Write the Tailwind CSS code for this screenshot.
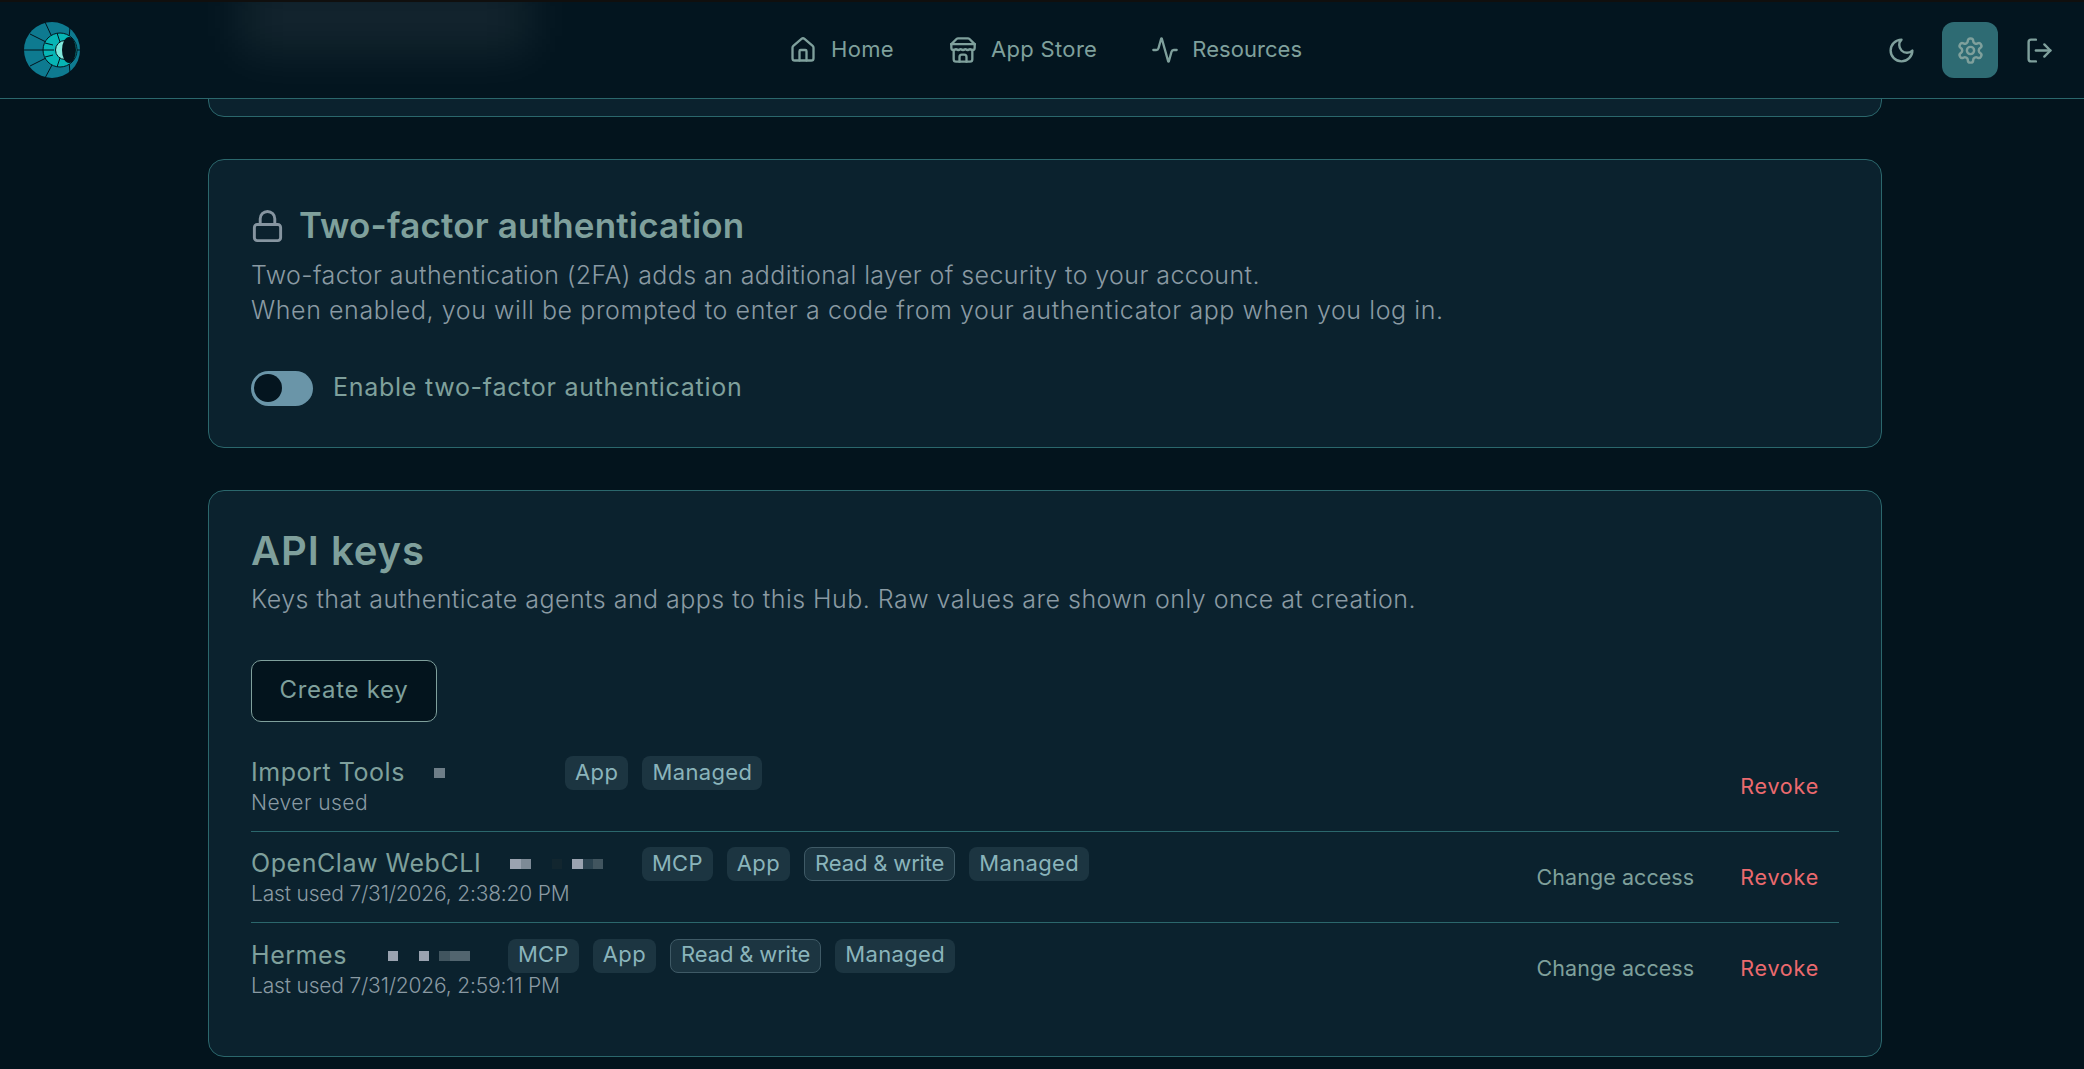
<!DOCTYPE html>
<html lang="en">
<head>
<meta charset="utf-8">
<title>Settings</title>
<script src="https://cdn.jsdelivr.net/npm/@tailwindcss/browser@4"></script>
</head>
<body class="bg-[#03141d] [font-family:Inter,sans-serif] overflow-hidden">
<div class="h-[1069px] overflow-hidden">
  <header class="relative h-[99px] border-t-2 border-t-[#100f0e] border-b border-b-[#2b676c] bg-[#03151f] flex items-center justify-between pl-[24px] pr-[17px] overflow-hidden">
    <div class="absolute left-[240px] top-[-20px] w-[290px] h-[70px] bg-white/7 blur-xl"></div>
    <svg class="w-[56px] h-[56px] relative" viewBox="0 0 56 56">
      <circle cx="28" cy="28" r="28" fill="#0e7a90"/>
      <g stroke="#03141d" stroke-width="1" fill="none">
        <path d="M0 28H20M6 12L22 20M21 0L27 13M6 44L22 36M21 56L28 43M46 5L45 17M46 51L45 39M50 28H56"/>
      </g>
      <circle cx="36" cy="28" r="17" fill="#07b5b5" stroke="#03141d" stroke-width="1"/>
      <path d="M21 21L29 23M21 35L29 33M19 28H30M33 11L36 20M33 45L36 36" stroke="#03141d" stroke-width="1"/>
      <circle cx="41" cy="28" r="9.5" fill="#7fe8dc" stroke="#03141d" stroke-width="1"/>
      <ellipse cx="45" cy="28" rx="7" ry="13" fill="#03141d"/>
    </svg>
    <nav class="absolute left-[789px] top-0 h-full flex items-center gap-[54px] text-[22px] tracking-[0.015em] text-[#7fa09c]">
      <a class="flex items-center gap-[14px] mr-[1px]">
        <svg class="w-[28px] h-[28px]" viewBox="0 0 24 24" fill="none" stroke="currentColor" stroke-width="2" stroke-linecap="round" stroke-linejoin="round"><path d="M15 21v-8a1 1 0 0 0-1-1h-4a1 1 0 0 0-1 1v8"/><path d="M3 10a2 2 0 0 1 .709-1.528l7-5.999a2 2 0 0 1 2.582 0l7 5.999A2 2 0 0 1 21 10v9a2 2 0 0 1-2 2H5a2 2 0 0 1-2-2z"/></svg>
        <span class="pb-[2px]">Home</span>
      </a>
      <a class="flex items-center gap-[14px]">
        <svg class="w-[28px] h-[28px]" viewBox="0 0 24 24" fill="none" stroke="currentColor" stroke-width="2" stroke-linecap="round" stroke-linejoin="round"><path d="m2 7 4.41-4.41A2 2 0 0 1 7.83 2h8.34a2 2 0 0 1 1.42.59L22 7"/><path d="M4 12v8a2 2 0 0 0 2 2h12a2 2 0 0 0 2-2v-8"/><path d="M15 22v-4a2 2 0 0 0-2-2h-2a2 2 0 0 0-2 2v4"/><path d="M2 7h20"/><path d="M22 7v3a2 2 0 0 1-2 2a2.7 2.7 0 0 1-1.59-.63.7.7 0 0 0-.82 0A2.7 2.7 0 0 1 16 12a2.7 2.7 0 0 1-1.59-.63.7.7 0 0 0-.82 0A2.7 2.7 0 0 1 12 12a2.7 2.7 0 0 1-1.59-.63.7.7 0 0 0-.82 0A2.7 2.7 0 0 1 8 12a2.7 2.7 0 0 1-1.59-.63.7.7 0 0 0-.82 0A2.7 2.7 0 0 1 4 12a2 2 0 0 1-2-2V7"/></svg>
        <span class="pb-[2px]">App Store</span>
      </a>
      <a class="flex items-center gap-[13px]">
        <svg class="w-[28px] h-[28px]" viewBox="0 0 24 24" fill="none" stroke="currentColor" stroke-width="2" stroke-linecap="round" stroke-linejoin="round"><path d="M22 12h-2.48a2 2 0 0 0-1.93 1.46l-2.35 8.36a.25.25 0 0 1-.48 0L9.24 2.18a.25.25 0 0 0-.48 0l-2.35 8.36A2 2 0 0 1 4.49 12H2"/></svg>
        <span class="pb-[2px] tracking-[0.002em]">Resources</span>
      </a>
    </nav>
    <div class="flex items-center gap-[13px] text-[#7fa09c]">
      <button class="w-[56px] h-[56px] flex items-center justify-center"><svg class="w-[29px] h-[29px]" viewBox="0 0 24 24" fill="none" stroke="currentColor" stroke-width="2" stroke-linecap="round" stroke-linejoin="round"><path d="M12 3a6 6 0 0 0 9 9 9 9 0 1 1-9-9Z"/></svg></button>
      <button class="w-[56px] h-[56px] flex items-center justify-center rounded-[12px] bg-[#2e6b73]"><svg class="w-[29px] h-[29px]" viewBox="0 0 24 24" fill="none" stroke="currentColor" stroke-width="2" stroke-linecap="round" stroke-linejoin="round"><path d="M12.22 2h-.44a2 2 0 0 0-2 2v.18a2 2 0 0 1-1 1.73l-.43.25a2 2 0 0 1-2 0l-.15-.08a2 2 0 0 0-2.73.73l-.22.38a2 2 0 0 0 .73 2.73l.15.1a2 2 0 0 1 1 1.72v.51a2 2 0 0 1-1 1.74l-.15.09a2 2 0 0 0-.73 2.73l.22.38a2 2 0 0 0 2.73.73l.15-.08a2 2 0 0 1 2 0l.43.25a2 2 0 0 1 1 1.73V20a2 2 0 0 0 2 2h.44a2 2 0 0 0 2-2v-.18a2 2 0 0 1 1-1.73l.43-.25a2 2 0 0 1 2 0l.15.08a2 2 0 0 0 2.73-.73l.22-.39a2 2 0 0 0-.73-2.73l-.15-.08a2 2 0 0 1-1-1.74v-.5a2 2 0 0 1 1-1.74l.15-.09a2 2 0 0 0 .73-2.73l-.22-.38a2 2 0 0 0-2.73-.73l-.15.08a2 2 0 0 1-2 0l-.43-.25a2 2 0 0 1-1-1.73V4a2 2 0 0 0-2-2z"/><circle cx="12" cy="12" r="3"/></svg></button>
      <button class="w-[56px] h-[56px] flex items-center justify-center"><svg class="w-[29px] h-[29px]" viewBox="0 0 24 24" fill="none" stroke="currentColor" stroke-width="2" stroke-linecap="round" stroke-linejoin="round"><path d="M9 21H5a2 2 0 0 1-2-2V5a2 2 0 0 1 2-2h4"/><path d="m16 17 5-5-5-5"/><path d="M21 12H9"/></svg></button>
    </div>
  </header>

  <main class="w-[1674px] ml-[208px]">
    <div class="h-[19px] -mt-px border border-[#2b676c] rounded-b-[16px] bg-[#0b222e]"></div>

    <section class="mt-[42px] h-[289px] border border-[#2b676c] rounded-[16px] bg-[#0b222e] px-[42px] pt-[42px]">
      <h2 class="flex items-center h-[47px] gap-[14px] text-[35px] font-semibold tracking-[0.005em] text-[#7fa09c]">
        <svg class="w-[35px] h-[38px] -ml-[1px] text-[#8695a0]" viewBox="0 0 24 24" fill="none" stroke="currentColor" stroke-width="2" stroke-linecap="round" stroke-linejoin="round"><rect x="3" y="11" width="18" height="11" rx="2"/><path d="M7 11V7a5 5 0 0 1 10 0v4"/></svg>
        Two-factor authentication
      </h2>
      <p class="mt-[9px] text-[25px] leading-[35px] font-light text-[#8a9aa3]"><span class="tracking-[0.016em]">Two-factor authentication (2FA) adds an additional layer of security to your account.</span><br><span class="tracking-[0.0235em]">When enabled, you will be prompted to enter a code from your authenticator app when you log in.</span></p>
      <div class="mt-[41px] flex items-center gap-[20px]">
        <span class="w-[62px] h-[35px] rounded-full bg-[#6a95a8] flex items-center pl-[3px]"><span class="w-[28px] h-[28px] rounded-full bg-[#04151f]"></span></span>
        <span class="pb-[1px] text-[25px] tracking-[0.029em] text-[#7fa09c]">Enable two-factor authentication</span>
      </div>
    </section>

    <section class="mt-[42px] h-[567px] border border-[#2b676c] rounded-[16px] bg-[#0b222e] px-[42px] pt-[39px]">
      <h2 class="h-[42px] flex items-center text-[40px] font-semibold tracking-[0.024em] text-[#7fa09c]">API keys</h2>
      <p class="mt-[10px] text-[25px] leading-[35px] font-light tracking-[0.019em] text-[#8a9aa3]">Keys that authenticate agents and apps to this Hub. Raw values are shown only once at creation.</p>
      <button class="mt-[43px] block w-[186px] h-[62px] pb-[2px] rounded-[10px] border border-[#7fa09c] bg-[#03141d] text-[24px] tracking-[0.03em] text-[#7fa09c]">Create key</button>

      <div class="mt-[19px]">
        <div class="h-[91px] flex items-center border-b border-[#2b676c]">
          <div class="flex-1">
            <div class="h-[34px] flex items-center">
              <span class="w-[183px] text-[25px] tracking-[0.022em] text-[#7fa09c]">Import Tools</span>
              <span class="w-[131px] flex"><i class="block w-[11px] h-[10px] bg-[#6e7e88]"></i></span>
              <span class="flex gap-[14px]">
                <span class="h-[34px] px-[10px] pb-[2px] rounded-[8px] bg-[#1c3541] text-[#8ab4bb] text-[22px] tracking-[0.02em] flex items-center">App</span>
                <span class="h-[34px] px-[10px] pb-[2px] rounded-[8px] bg-[#1c3541] text-[#8ab4bb] text-[22px] tracking-[0.016em] flex items-center">Managed</span>
              </span>
            </div>
            <div class="h-[26px] flex items-center text-[21px] font-light tracking-[0.021em] text-[#8a9aa3]">Never used</div>
          </div>
          <button class="px-[20px] text-[21.5px] tracking-[0.037em] text-[#ec6a6e]">Revoke</button>
        </div>

        <div class="h-[91px] flex items-center border-b border-[#2b676c]">
          <div class="flex-1">
            <div class="h-[34px] flex items-center">
              <span class="w-[259px] text-[25px] tracking-[0.022em] text-[#7fa09c]">OpenClaw WebCLI</span>
              <span class="w-[132px] flex"><i class="block w-[11px] h-[10px] bg-[#9aa3b0]"></i><i class="block w-[10px] h-[10px] bg-[#7d8a96]"></i><i class="block ml-[21px] w-[10px] h-[10px] bg-[#12262f]"></i><i class="block ml-[10px] w-[11px] h-[10px] bg-[#9aa3b0]"></i><i class="block w-[10px] h-[10px] bg-[#2b4350]"></i><i class="block w-[10px] h-[10px] bg-[#41555f]"></i></span>
              <span class="flex gap-[14px]">
                <span class="h-[34px] px-[10px] pb-[2px] rounded-[8px] bg-[#1c3541] text-[#8ab4bb] text-[22px] tracking-[0.01em] flex items-center">MCP</span>
                <span class="h-[34px] px-[10px] pb-[2px] rounded-[8px] bg-[#1c3541] text-[#8ab4bb] text-[22px] tracking-[0.02em] flex items-center">App</span>
                <span class="h-[34px] px-[10px] pb-[2px] rounded-[8px] bg-[#1c3541] border border-[#3f5a66] text-[#8ab4bb] text-[22px] tracking-[-0.007em] flex items-center">Read &amp; write</span>
                <span class="h-[34px] px-[10px] pb-[2px] rounded-[8px] bg-[#1c3541] text-[#8ab4bb] text-[22px] tracking-[0.016em] flex items-center">Managed</span>
              </span>
            </div>
            <div class="h-[26px] flex items-center text-[21px] font-light tracking-[-0.009em] text-[#8a9aa3]">Last used 7/31/2026, 2:38:20 PM</div>
          </div>
          <button class="px-[20px] text-[21.5px] tracking-[0.003em] text-[#7fa09c]">Change access</button>
          <button class="px-[20px] ml-[6px] text-[21.5px] tracking-[0.037em] text-[#ec6a6e]">Revoke</button>
        </div>

        <div class="h-[91px] flex items-center">
          <div class="flex-1">
            <div class="h-[34px] flex items-center">
              <span class="w-[137px] text-[25px] tracking-[0.022em] text-[#7fa09c]">Hermes</span>
              <span class="w-[120px] flex"><i class="block w-[10px] h-[10px] bg-[#9aa3b0]"></i><i class="block ml-[21px] w-[10px] h-[10px] bg-[#9aa3b0]"></i><i class="block ml-[10px] w-[11px] h-[10px] bg-[#41555f]"></i><i class="block w-[10px] h-[10px] bg-[#52656f]"></i><i class="block w-[10px] h-[10px] bg-[#52656f]"></i></span>
              <span class="flex gap-[14px]">
                <span class="h-[34px] px-[10px] pb-[2px] rounded-[8px] bg-[#1c3541] text-[#8ab4bb] text-[22px] tracking-[0.01em] flex items-center">MCP</span>
                <span class="h-[34px] px-[10px] pb-[2px] rounded-[8px] bg-[#1c3541] text-[#8ab4bb] text-[22px] tracking-[0.02em] flex items-center">App</span>
                <span class="h-[34px] px-[10px] pb-[2px] rounded-[8px] bg-[#1c3541] border border-[#3f5a66] text-[#8ab4bb] text-[22px] tracking-[-0.007em] flex items-center">Read &amp; write</span>
                <span class="h-[34px] px-[10px] pb-[2px] rounded-[8px] bg-[#1c3541] text-[#8ab4bb] text-[22px] tracking-[0.016em] flex items-center">Managed</span>
              </span>
            </div>
            <div class="h-[26px] flex items-center text-[21px] font-light tracking-[-0.009em] text-[#8a9aa3]">Last used 7/31/2026, 2:59:11 PM</div>
          </div>
          <button class="px-[20px] text-[21.5px] tracking-[0.003em] text-[#7fa09c]">Change access</button>
          <button class="px-[20px] ml-[6px] text-[21.5px] tracking-[0.037em] text-[#ec6a6e]">Revoke</button>
        </div>
      </div>
    </section>
  </main>
</div>
</body>
</html>
